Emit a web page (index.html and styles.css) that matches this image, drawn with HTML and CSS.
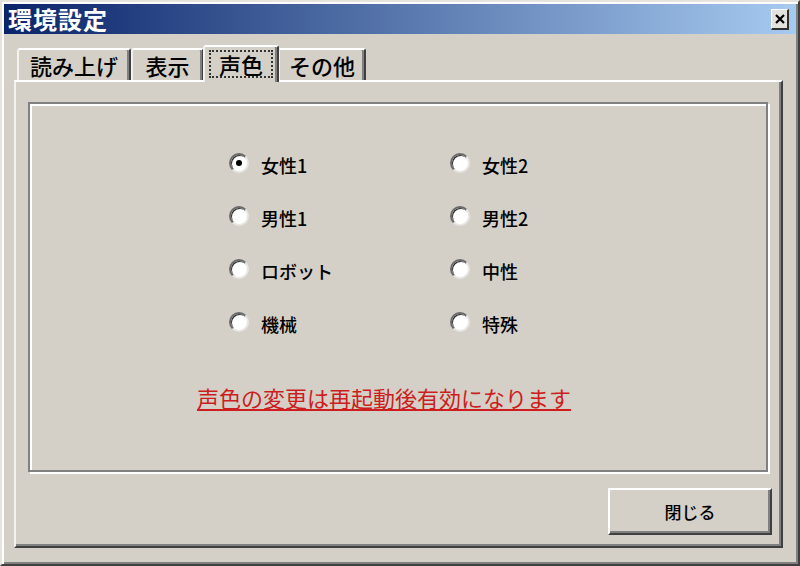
FILE: index.html
```html
<!DOCTYPE html>
<html lang="ja">
<head>
<meta charset="utf-8">
<title>環境設定</title>
<link rel="stylesheet" href="styles.css">
</head>
<body>
<div class="window">
  <div class="titlebar">
    <span class="title">環境設定</span>
    <span class="close">
      <svg width="10" height="10" viewBox="0 0 10 10"><path d="M1 1 L9 9 M9 1 L1 9" stroke="#000" stroke-width="2.2"/></svg>
    </span>
  </div>
  <div class="content">
    <div class="tabs">
      <div class="tab tab-read">読み上げ</div>
      <div class="tab tab-view">表示</div>
      <div class="tab tab-voice active"><span class="focus">声色</span></div>
      <div class="tab tab-other">その他</div>
    </div>
    <div class="panel">
      <div class="group">
        <div class="radios">
          <label class="radio"><span class="dot checked"></span><span>女性1</span></label>
          <label class="radio"><span class="dot"></span><span>女性2</span></label>
          <label class="radio"><span class="dot"></span><span>男性1</span></label>
          <label class="radio"><span class="dot"></span><span>男性2</span></label>
          <label class="radio"><span class="dot"></span><span>ロボット</span></label>
          <label class="radio"><span class="dot"></span><span>中性</span></label>
          <label class="radio"><span class="dot"></span><span>機械</span></label>
          <label class="radio"><span class="dot"></span><span>特殊</span></label>
        </div>
        <p class="notice">声色の変更は再起動後有効になります</p>
      </div>
      <div class="footer">
        <button class="btn">閉じる</button>
      </div>
    </div>
  </div>
</div>
</body>
</html>
```
FILE: styles.css
```css
* { box-sizing: border-box; }
html, body { margin: 0; padding: 0; }
body {
  width: 800px;
  height: 566px;
  overflow: hidden;
  background: #d4d0c8;
  font-family: "Noto Sans CJK JP", "Noto Sans", sans-serif;
  color: #000;
}
.window {
  width: 800px;
  height: 566px;
  background: #d4d0c8;
  border-style: solid;
  border-width: 2px;
  border-color: #e6e3dc #404040 #404040 #e6e3dc;
  box-shadow: inset 2px 2px 0 #fff, inset -2px -2px 0 #808080;
  padding: 2px;
  display: flex;
  flex-direction: column;
}
.titlebar {
  height: 30px;
  flex: none;
  background: linear-gradient(to right, #0a246a, #a6caf0);
  display: flex;
  align-items: center;
  justify-content: space-between;
  padding: 0 7px 0 4px;
}
.title {
  color: #fff;
  font-weight: bold;
  font-size: 24px;
  line-height: 30px;
  letter-spacing: 1px;
}
.close {
  width: 18px;
  height: 21px;
  background: #e4e2dc;
  border-style: solid;
  border-width: 1px 2px 2px 1px;
  border-color: #fff #303030 #303030 #fff;
  display: flex;
  align-items: center;
  justify-content: center;
}
.content {
  flex: 1;
  display: flex;
  flex-direction: column;
  padding: 11px 13px 14px 10px;
}
.tabs {
  display: flex;
  align-items: flex-end;
  height: 35px;
  padding-left: 3px;
  flex: none;
}
.tab {
  height: 32px;
  padding: 0;
  text-align: center;
  font-size: 22px;
  font-weight: 500;
  line-height: 30px;
  border-style: solid;
  border-width: 2px 2px 0 2px;
  border-color: #fff #404040 transparent #f4f2ee;
  border-radius: 3px 3px 0 0;
  background: #d4d0c8;
  box-shadow: inset -2px 0 0 #808080;
}
.tab-read { width: 114px; }
.tab-view { width: 73px; }
.tab-voice { width: 74px; }
.tab-other { width: 88px; }
.tab.active {
  height: 37px;
  width: 76px;
  margin: 0 -1px -2px -1px;
  padding: 3px 4px 0 4px;
  position: relative;
  z-index: 1;
}
.focus {
  display: block;
  border: 2px dotted #333;
  line-height: 24px;
}
.panel {
  flex: 1;
  display: flex;
  flex-direction: column;
  border-style: solid;
  border-width: 2px;
  border-color: #fff #404040 #404040 #f4f2ee;
  box-shadow: inset -2px -2px 0 #808080;
  padding: 20px 13px 0 12px;
}
.group {
  height: 370px;
  border: 2px solid #808080;
  box-shadow: inset 2px 2px 0 #fff, 2px 2px 0 #fff;
  padding-top: 32px;
}
.radios {
  display: grid;
  grid-template-columns: 221px 221px;
  grid-auto-rows: 53px;
  margin-left: 199px;
}
.radio {
  display: flex;
  align-items: center;
  gap: 12px;
  font-size: 18px;
  font-weight: 500;
}
.radio span:last-child { position: relative; top: 2px; }
.dot {
  width: 20px;
  height: 20px;
  border-radius: 50%;
  background: #fff;
  border-style: solid;
  border-width: 2px;
  border-color: #6a6a6a #e8e6e2 #e8e6e2 #6a6a6a;
  box-shadow: inset 1px 1px 0 #303030;
  display: flex;
  align-items: center;
  justify-content: center;
  flex: none;
}
.dot.checked::after {
  content: "";
  width: 6px;
  height: 6px;
  border-radius: 50%;
  background: #000;
}
.notice {
  margin: 36px 0 0 167px;
  font-size: 22px;
  line-height: 26px;
  color: #cc1e1e;
  text-decoration: underline;
  text-decoration-thickness: 2px;
  text-underline-offset: 2px;
}
.footer {
  display: flex;
  justify-content: flex-end;
  margin-top: 16px;
  margin-right: -4px;
}
.btn {
  width: 164px;
  height: 47px;
  font-family: inherit;
  font-size: 17px;
  font-weight: 500;
  color: #000;
  background: #d4d0c8;
  border-style: solid;
  border-width: 2px;
  border-color: #fff #404040 #404040 #fff;
  box-shadow: inset -2px -2px 0 #808080;
  padding: 0;
}
```
